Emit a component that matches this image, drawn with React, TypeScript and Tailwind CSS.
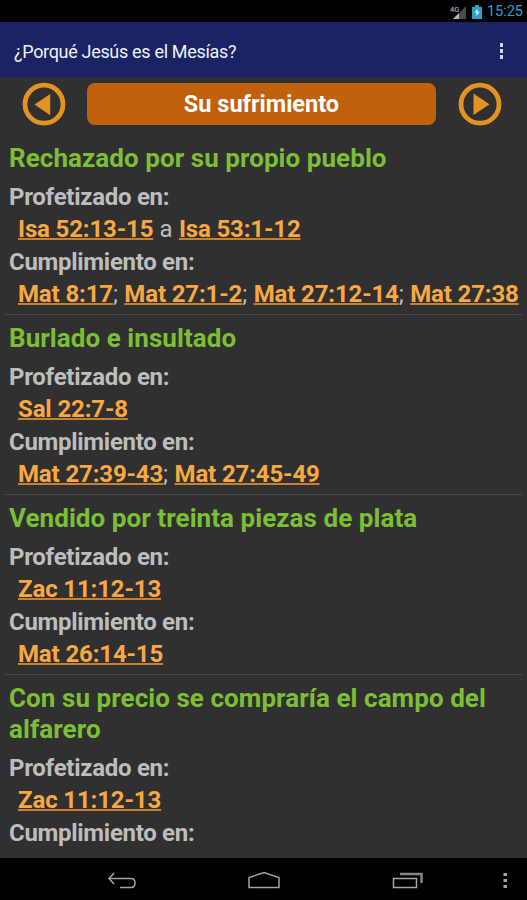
import { Fragment } from 'react';

type Section = {
  title: string;
  prophecy: string[];
  prophecySep?: string;
  fulfilled: string[];
};

const sections: Section[] = [
  {
    title: 'Rechazado por su propio pueblo',
    prophecy: ['Isa 52:13-15', 'Isa 53:1-12'],
    prophecySep: ' a ',
    fulfilled: ['Mat 8:17', 'Mat 27:1-2', 'Mat 27:12-14', 'Mat 27:38'],
  },
  {
    title: 'Burlado e insultado',
    prophecy: ['Sal 22:7-8'],
    fulfilled: ['Mat 27:39-43', 'Mat 27:45-49'],
  },
  {
    title: 'Vendido por treinta piezas de plata',
    prophecy: ['Zac 11:12-13'],
    fulfilled: ['Mat 26:14-15'],
  },
  {
    title: 'Con su precio se compraría el campo del alfarero',
    prophecy: ['Zac 11:12-13'],
    fulfilled: [],
  },
];

function StatusBar() {
  return (
    <div className="flex h-[22px] shrink-0 items-center justify-end bg-black pr-[4px] pt-px">
      <svg width="17" height="16" viewBox="0 0 17 16" className="mr-[5px]">
        <path d="M16 2V15H3Z" fill="#4a4a4a" />
        <path d="M9 9V15H3Z" fill="#b5b5b5" />
        <text x="0" y="8" fontSize="7.5" fontWeight="500" fontFamily="Roboto, sans-serif" fill="#a8a8a8">4G</text>
      </svg>
      <svg width="10" height="14" viewBox="0 0 10 15" preserveAspectRatio="none" className="mr-[5px]">
        <path d="M3 0H7V2H10V15H0V2H3Z" fill="#319fc4" />
        <path d="M6 4L2.5 8H4.8L4 12L7.7 7.2H5.3Z" fill="#e6f6fb" />
      </svg>
      <span className="pt-px text-[14.5px] leading-none text-[#319fc4]">15:25</span>
    </div>
  );
}

function TitleBar() {
  return (
    <div className="flex h-[56px] shrink-0 items-center justify-between bg-[#1a2363] pl-[14px] pr-[24px]">
      <h1 className="pt-[3px] text-[18px] leading-none tracking-[-0.32px] text-[#f0f0f6]">¿Porqué Jesús es el Mesías?</h1>
      <button className="flex flex-col gap-[2px] pt-px">
        <span className="h-[4px] w-[3px] bg-[#d4d6e4]" />
        <span className="h-[4px] w-[3px] bg-[#d4d6e4]" />
        <span className="h-[4px] w-[3px] bg-[#d4d6e4]" />
      </button>
    </div>
  );
}

function ArrowButton({ next }: { next?: boolean }) {
  return (
    <button className="shrink-0">
      <svg width="44" height="44" viewBox="0 0 44 44">
        <circle cx="22" cy="22.2" r="19" fill="none" stroke="#e39322" strokeWidth="4.8" />
        <path d={next ? 'M15.500 11.500V33L31.500 22.200Z' : 'M28.200 12V33.200L12.500 22.500Z'} fill="#e39322" />
      </svg>
    </button>
  );
}

function Refs({ items, sep = '; ' }: { items: string[]; sep?: string }) {
  return (
    <p className="h-[32.5px] whitespace-nowrap pl-[9px] tracking-[0.2px] text-[#bdbdbd]">
      {items.map((item, i) => (
        <Fragment key={item}>
          {i > 0 && sep}
          <a className="font-bold tracking-[-0.14px] text-[#f8a842] underline decoration-[#c9812f] decoration-[2px] underline-offset-[1px] [text-decoration-skip-ink:none]">
            {item}
          </a>
        </Fragment>
      ))}
    </p>
  );
}

function SectionBlock({ section }: { section: Section }) {
  return (
    <section className="h-[180px] shrink-0 border-b border-[#484848] px-[4px] pt-[8px] text-[24px] leading-[32.5px] last:h-auto last:border-b-0">
      <h2 className="mb-[6px] text-[26px] font-bold leading-[31px] tracking-[0.06px] text-[#7cbf35]">{section.title}</h2>
      <p className="h-[32.5px] pt-[0.5px] font-bold tracking-[-0.28px] text-[#bdbdbd]">Profetizado en:</p>
      <Refs items={section.prophecy} sep={section.prophecySep} />
      <p className="h-[32.5px] pt-[0.5px] font-bold tracking-[-0.3px] text-[#bdbdbd]">Cumplimiento en:</p>
      {section.fulfilled.length > 0 && <Refs items={section.fulfilled} />}
    </section>
  );
}

function NavBar() {
  return (
    <div className="flex h-[42px] shrink-0 items-center bg-black">
      <svg width="527" height="42" viewBox="0 0 527 42" fill="none" stroke="#a3a3a3" strokeWidth="1.5">
        <path d="M114 15L109 20.5L114 26M109 20.5H131Q135 20.5 135 25T131 29.5H120" />
        <path d="M249 29.5V19.5L264 14.5L279 19.5V29.5Z" />
        <path d="M393.5 20.5H416.5V29.5H393.5Z" />
        <path d="M400 16H421.5V25" strokeWidth="2.5" stroke="#858585" />
        <path d="M503.500 16.500H507M503.500 22.500H507M503.500 28.500H507" strokeWidth="3" />
      </svg>
    </div>
  );
}

export default function App() {
  return (
    <div className="flex h-[900px] w-[527px] flex-col overflow-hidden bg-[#303030] font-[Roboto,sans-serif]">
      <StatusBar />
      <TitleBar />
      <div className="flex h-[57px] shrink-0 items-start pl-[22px] pt-[4px]">
        <ArrowButton />
        <div className="ml-[21px] mr-[22px] mt-px flex h-[42px] w-[349px] items-center justify-center rounded-[8px] bg-[#c1610c] pt-[2px] text-[23.5px] font-bold leading-none text-white">
          Su sufrimiento
        </div>
        <ArrowButton next />
      </div>
      <main className="flex min-h-0 flex-1 flex-col overflow-hidden px-[5px]">
        {sections.map((s) => (
          <SectionBlock key={s.title} section={s} />
        ))}
      </main>
      <NavBar />
    </div>
  );
}
